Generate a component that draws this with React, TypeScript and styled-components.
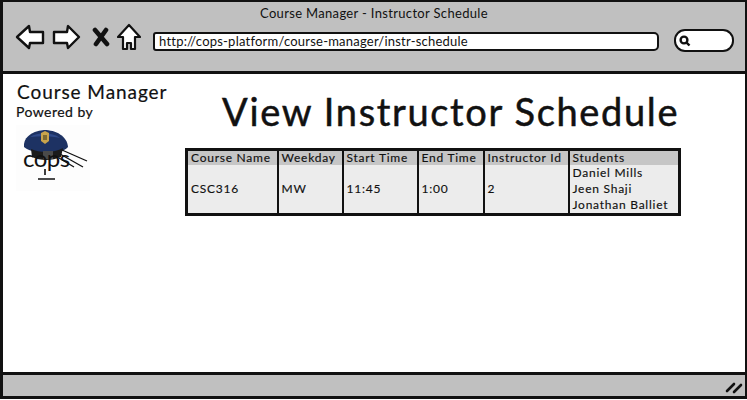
import styled, { createGlobalStyle } from "styled-components";

const GlobalStyle = createGlobalStyle`
  html, body {
    margin: 0;
    padding: 0;
    background: #ffffff;
  }
  body {
    font-family: "Lato", "Noto Sans", sans-serif;
    color: #111111;
  }
`;

const Janela = styled.div`
  box-sizing: border-box;
  width: 747px;
  height: 399px;
  border: 3px solid #111111;
  border-top-width: 2px;
  border-right-width: 2px;
  display: flex;
  flex-direction: column;
  background: #ffffff;
`;

const BarraTopo = styled.header`
  box-sizing: border-box;
  height: 72px;
  background: #c0c0c0;
  border-bottom: 3px solid #111111;
  display: flex;
  flex-direction: column;
  flex-shrink: 0;
`;

const TituloJanela = styled.div`
  height: 24px;
  line-height: 23px;
  text-align: center;
  font-size: 13px;
  letter-spacing: 0.33px;
`;

const BarraNavegacao = styled.nav`
  display: flex;
  align-items: center;
  height: 24px;
  margin-top: -1px;
  padding-left: 12px;
`;

const IconeBotao = styled.svg<{ $margem?: number }>`
  flex-shrink: 0;
  margin-right: ${(p) => p.$margem ?? 0}px;
`;

const CampoUrl = styled.div`
  box-sizing: border-box;
  width: 506px;
  height: 19px;
  margin-left: 12px;
  margin-top: 8px;
  background: #ffffff;
  border: 2px solid #111111;
  border-radius: 3px 5px 5px 3px;
  font-size: 13px;
  line-height: 15px;
  padding-left: 4px;
  letter-spacing: 0.22px;
  white-space: nowrap;
`;

const CampoBusca = styled.div`
  box-sizing: border-box;
  width: 60px;
  height: 23px;
  margin-left: 15px;
  margin-top: 7px;
  background: #ffffff;
  border: 2px solid #111111;
  border-radius: 11px;
  display: flex;
  align-items: center;
  padding-left: 3px;
`;

const Conteudo = styled.main`
  flex: 1;
  display: flex;
`;

const Lateral = styled.aside`
  width: 180px;
  flex-shrink: 0;
  padding: 7px 0 0 13px;
  box-sizing: border-box;
`;

const NomeApp = styled.div`
  font-size: 19px;
  line-height: 22px;
  padding-left: 1px;
  letter-spacing: 0.93px;
  -webkit-text-stroke: 0.2px #111111;
  white-space: nowrap;
`;

const Powered = styled.div`
  font-size: 14px;
  line-height: 18px;
  letter-spacing: 0.45px;
  -webkit-text-stroke: 0.2px #111111;
`;

const Logo = styled.svg`
  display: block;
  margin: 4px 0 0 0;
`;

const Principal = styled.section`
  flex: 1;
  padding-left: 2px;
`;

const TituloPagina = styled.h1`
  margin: 14px 0 0 37px;
  font-size: 38px;
  line-height: 46px;
  font-weight: 400;
  letter-spacing: 1.65px;
  -webkit-text-stroke: 0.5px #111111;
  white-space: nowrap;
`;

const Tabela = styled.table`
  border-collapse: collapse;
  table-layout: fixed;
  width: 496px;
  height: 64px;
  margin-top: 14px;
  border: 3px solid #111111;
  font-size: 12px;
  letter-spacing: 0.75px;
  -webkit-text-stroke: 0.15px #111111;
`;

const CabecalhoCelula = styled.th<{ $largura: number }>`
  width: ${(p) => p.$largura}px;
  box-sizing: border-box;
  height: 14px;
  padding: 0 0 0 3px;
  background: #c6c6c6;
  border-left: 2px solid #111111;
  font-weight: 400;
  text-align: left;
  line-height: 14px;
  white-space: nowrap;
  overflow: hidden;

  &:first-child {
    border-left: 0;
  }
`;

const Celula = styled.td`
  padding: 0 0 0 3px;
  background: #ececec;
  border-left: 2px solid #111111;
  line-height: 16px;
  white-space: nowrap;

  &:first-child {
    border-left: 0;
  }
`;

const Aluno = styled.div`
  line-height: 16px;
`;

const Rodape = styled.footer`
  box-sizing: border-box;
  height: 24px;
  background: #c0c0c0;
  border-top: 3px solid #111111;
  flex-shrink: 0;
  display: flex;
  justify-content: flex-end;
  align-items: center;
  padding: 3px 2px 0 0;
`;

const colunas = [
  { nome: "Course Name", largura: 91 },
  { nome: "Weekday", largura: 65 },
  { nome: "Start Time", largura: 75 },
  { nome: "End Time", largura: 66 },
  { nome: "Instructor Id", largura: 85 },
  { nome: "Students", largura: 111 },
];

const linha = ["CSC316", "MW", "11:45", "1:00", "2"];
const alunos = ["Daniel Mills", "Jeen Shaji", "Jonathan Balliet"];

function IconeVoltar() {
  return (
    <IconeBotao width="30" height="26" viewBox="0 0 30 26" $margem={6}>
      <path d="M2 13 L14 2 L15 8 L28 8 L28 19 L15 19 L14 24 Z" fill="#fff" stroke="#111" strokeWidth="2.4" strokeLinejoin="round" />
    </IconeBotao>
  );
}

function IconeAvancar() {
  return (
    <IconeBotao width="30" height="26" viewBox="0 0 30 26" $margem={11}>
      <path d="M28 13 L17 2 L16 8 L3 8 L3 19 L16 19 L17 24 Z" fill="#fff" stroke="#111" strokeWidth="2.4" strokeLinejoin="round" />
    </IconeBotao>
  );
}

function IconeFechar() {
  return (
    <IconeBotao width="18" height="20" viewBox="0 0 18 20" $margem={7}>
      <path d="M3 3 L15 17 M14 3 L4 17" stroke="#111" strokeWidth="4.6" strokeLinecap="round" fill="none" />
    </IconeBotao>
  );
}

function IconeCasa() {
  return (
    <IconeBotao width="24" height="28" viewBox="0 0 24 28">
      <path d="M12 2 L23 14 L18 14 L18 26 L14 26 L14 20 L10 20 L10 26 L6 26 L6 14 L1 14 Z" fill="#fff" stroke="#111" strokeWidth="2.2" strokeLinejoin="round" />
    </IconeBotao>
  );
}

function IconeLupa() {
  return (
    <svg width="12" height="12" viewBox="0 0 12 12">
      <circle cx="5" cy="5" r="3.4" fill="#fff" stroke="#111" strokeWidth="2.4" />
      <path d="M7.6 7.6 L10.5 10.5" stroke="#111" strokeWidth="2.4" />
    </svg>
  );
}

function LogoCops() {
  return (
    <Logo width="74" height="66" viewBox="0 0 74 66">
      <rect width="74" height="66" fill="#fdfdfd" />
      <path d="M8 22 C7 14 14 6 28 5 C40 5 51 11 52 22 C45 30 18 30 8 22 Z" fill="#1d3263" />
      <path d="M14 12 C22 7 36 7 44 13 C36 11 24 11 14 12 Z" fill="#2f4a8a" />
      <path d="M25 8 L29 6 L33 8 L33 16 L29 19 L25 16 Z" fill="#c8a44c" />
      <path d="M27 10 L31 10 L31 15 L27 15 Z" fill="#7d6a33" />
      <path d="M15 24 C24 28 38 28 47 23 L45 32 C36 36 24 36 16 32 Z" fill="#1b1b1b" />
      <path d="M27 26 L37 26 L37 34 L27 34 Z" fill="#4a4a4a" />
      <text x="7" y="42" fontFamily="Lato, sans-serif" fontSize="24" fill="#111" letterSpacing="-0.5">cops</text>
      <path d="M29 44 L29 50 M22 54 L39 54" stroke="#111" strokeWidth="1.6" fill="none" />
      <path d="M46 25 L71 36 M44 29 L67 42 M43 33 L58 42" stroke="#111" strokeWidth="1.3" fill="none" />
    </Logo>
  );
}

export default function App() {
  return (
    <>
      <GlobalStyle />
      <Janela>
        <BarraTopo>
          <TituloJanela>Course Manager - Instructor Schedule</TituloJanela>
          <BarraNavegacao>
            <IconeVoltar />
            <IconeAvancar />
            <IconeFechar />
            <IconeCasa />
            <CampoUrl>http://cops-platform/course-manager/instr-schedule</CampoUrl>
            <CampoBusca>
              <IconeLupa />
            </CampoBusca>
          </BarraNavegacao>
        </BarraTopo>
        <Conteudo>
          <Lateral>
            <NomeApp>Course Manager</NomeApp>
            <Powered>Powered by</Powered>
            <LogoCops />
          </Lateral>
          <Principal>
            <TituloPagina>View Instructor Schedule</TituloPagina>
            <Tabela>
              <thead>
                <tr>
                  {colunas.map((c) => (
                    <CabecalhoCelula key={c.nome} $largura={c.largura}>{c.nome}</CabecalhoCelula>
                  ))}
                </tr>
              </thead>
              <tbody>
                <tr>
                  {linha.map((v) => (
                    <Celula key={v}>{v}</Celula>
                  ))}
                  <Celula>
                    {alunos.map((a) => (
                      <Aluno key={a}>{a}</Aluno>
                    ))}
                  </Celula>
                </tr>
              </tbody>
            </Tabela>
          </Principal>
        </Conteudo>
        <Rodape>
          <svg width="18" height="14" viewBox="0 0 18 14">
            <path d="M2 11 L9 4 M9 12 L16 5" stroke="#111" strokeWidth="2.6" strokeLinecap="round" />
          </svg>
        </Rodape>
      </Janela>
    </>
  );
}
